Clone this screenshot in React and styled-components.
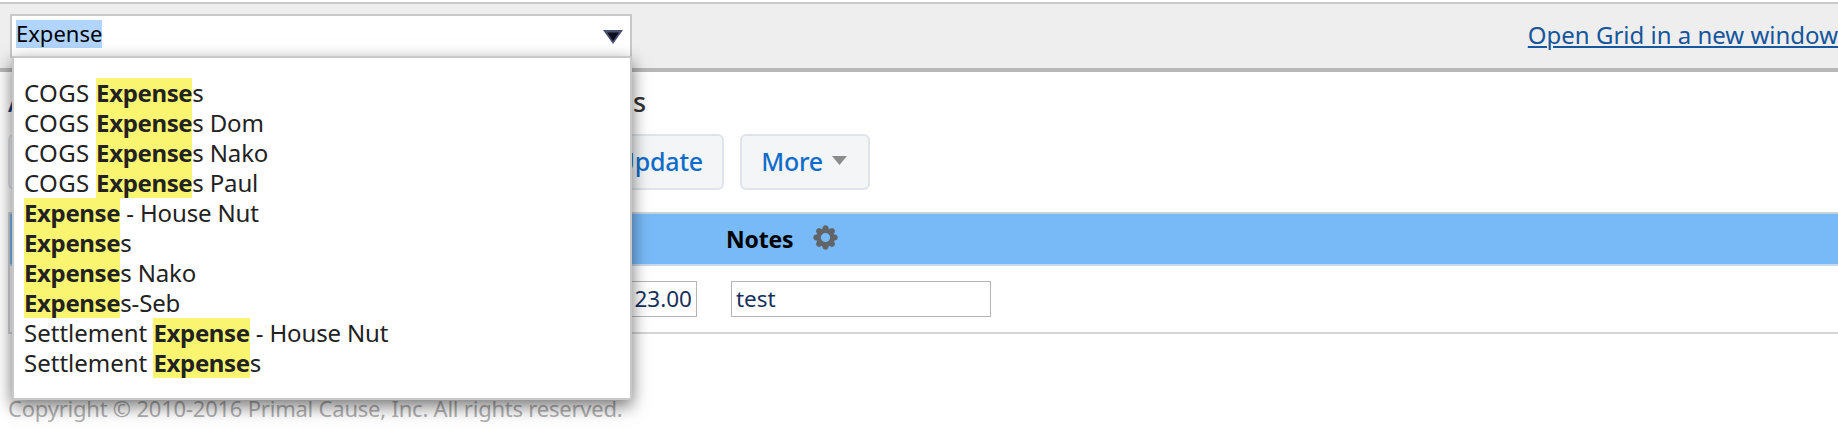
import React from "react";
import styled, { createGlobalStyle } from "styled-components";

const GlobalStyle = createGlobalStyle`
  * { box-sizing: border-box; }
  body {
    margin: 0;
    background: #fff;
    font-family: "Noto Sans", "Open Sans", sans-serif;
    font-size: 24px;
    line-height: 30px;
    white-space: pre;
  }
`;

const Page = styled.div`
  padding-top: 2px;
`;

const Toolbar = styled.header`
  display: flex;
  justify-content: space-between;
  align-items: flex-start;
  height: 70px;
  padding: 10px 0 0 10px;
  background: #eee;
  border-top: 2px solid #c8c8c8;
  border-bottom: 4px solid #b7b7b7;
`;

const Combo = styled.div`
  position: relative;
  display: flex;
  align-items: flex-start;
  justify-content: space-between;
  width: 622px;
  height: 44px;
  padding: 4px 7px 0 4px;
  background: #fff;
  border: 2px solid #c8c8c8;
`;

const Selected = styled.span`
  height: 28px;
  line-height: 27px;
  font-size: 22px;
  color: #000;
  background: #b1d5fe;
`;

const ComboArrow = styled.svg`
  width: 20px;
  height: 14px;
  margin-top: 10px;
`;

const Dropdown = styled.ul`
  position: absolute;
  top: 40px;
  left: 0;
  z-index: 2;
  width: 620px;
  height: 344px;
  margin: 0;
  padding: 20px 10px;
  list-style: none;
  background: #fff;
  border: 2px solid #c8c8c8;
  box-shadow: 0 6px 16px rgba(0, 0, 0, 0.55);
`;

const Option = styled.li`
  display: flex;
  height: 30px;
  color: #222;
`;

const Prefix = styled.span`
  letter-spacing: ${(p) => (p.$wide ? "0.35px" : "0")};
`;

const Suffix = styled.span`
  letter-spacing: -0.16px;
`;

const Match = styled.b`
  background: #faf570;
  letter-spacing: -0.36px;
`;

const NewWindowLink = styled.a`
  margin-top: 6px;
  color: #15569c;
  text-decoration: underline;
  text-decoration-thickness: 2px;
  text-underline-offset: 2px;
`;

const Content = styled.main`
  padding-left: 8px;
`;

const Heading = styled.div`
  display: flex;
  justify-content: space-between;
  width: 638px;
  height: 62px;
  padding-top: 15px;
  font-size: 27px;
  font-weight: 500;
  color: #333;
`;

const Crumb = styled.span`
  color: #1b3a70;
`;

const Actions = styled.div`
  display: flex;
  gap: 16px;
  height: 56px;
`;

const Button = styled.button`
  display: flex;
  align-items: center;
  justify-content: flex-end;
  gap: 9px;
  width: ${(p) => p.$width}px;
  height: 56px;
  padding: 0 ${(p) => p.$pad}px 3px 0;
  font: 500 25px/30px "Noto Sans", sans-serif;
  letter-spacing: -0.2px;
  color: #0f6cc8;
  background: #f3f5f7;
  border: 2px solid #dfe4ea;
  border-radius: 6px;
`;

const Grid = styled.section`
  margin-top: 22px;
  border-left: 2px solid #d4d7db;
`;

const Cells = styled.div`
  display: grid;
  grid-template-columns: 687px 34px 260px;
  align-items: center;
`;

const HeadRow = styled(Cells)`
  height: 54px;
  background: #78baf7;
  border-top: 2px solid #c9d3dc;
  border-bottom: 2px solid #c9d8e8;
`;

const HeadCell = styled.div`
  grid-column: 3;
  display: flex;
  align-items: center;
  gap: 20px;
  margin-left: -5px;
  font-size: 23px;
  font-weight: 700;
  letter-spacing: -0.2px;
  color: #000;
`;

const BodyRow = styled(Cells)`
  height: 68px;
  border-bottom: 2px solid #d6d6d6;
`;

const Field = styled.div`
  grid-column: ${(p) => p.$column};
  justify-self: end;
  width: ${(p) => p.$width}px;
  height: 36px;
  padding: 0 4px;
  border: 1px solid #b5b5b5;
  font-size: 22.5px;
  line-height: 33px;
  color: #17305a;
  text-align: ${(p) => p.$align || "left"};
`;

const Footer = styled.footer`
  margin-top: 59px;
  font-size: 22px;
  letter-spacing: -0.22px;
  color: #b0b0b0;
`;

const options = [
  ["COGS ", "s"],
  ["COGS ", "s Dom"],
  ["COGS ", "s Nako"],
  ["COGS ", "s Paul"],
  ["", " - House Nut"],
  ["", "s"],
  ["", "s Nako"],
  ["", "s-Seb"],
  ["Settlement ", " - House Nut"],
  ["Settlement ", "s"],
];

const GearIcon = styled.svg`
  width: 25px;
  height: 25px;
  margin-top: -3px;
`;

const Gear = () => (
  <GearIcon viewBox="-12.5 -12.5 25 25">
    <g fill="#626568">
      {[0, 45, 90, 135, 180, 225, 270, 315].map((a) => (
        <path key={a} transform={`rotate(${a})`} d="M-3.6-8-2.2-11.4Q0-13 2.2-11.4L3.6-8Z" />
      ))}
    </g>
    <circle r="6.8" fill="none" stroke="#626568" strokeWidth="4.4" />
  </GearIcon>
);

export default function App() {
  return (
    <>
      <GlobalStyle />
      <Page>
        <Toolbar>
          <Combo>
            <Selected>Expense</Selected>
            <ComboArrow viewBox="0 0 20 14">
              <path d="M0 0H20L10 14Z" fill="#4b5070" />
              <path d="M4 2.5H16L10 11Z" fill="#0c0e1e" />
            </ComboArrow>
            <Dropdown>
              {options.map(([before, after]) => (
                <Option key={before + after}>
                  <Prefix $wide={before === "COGS "}>{before}</Prefix>
                  <Match>Expense</Match>
                  <Suffix>{after}</Suffix>
                </Option>
              ))}
            </Dropdown>
          </Combo>
          <NewWindowLink>Open Grid in a new window</NewWindowLink>
        </Toolbar>
        <Content>
          <Heading>
            <Crumb>A</Crumb>
            <span>s</span>
          </Heading>
          <Actions>
            <Button $width={716} $pad={19}>Update</Button>
            <Button $width={130} $pad={21}>
              More
              <svg width="15" height="9" viewBox="0 0 15 9">
                <path d="M0 0H15L7.5 9Z" fill="#8b8b8b" />
              </svg>
            </Button>
          </Actions>
          <Grid>
            <HeadRow>
              <HeadCell>
                Notes
                <Gear />
              </HeadCell>
            </HeadRow>
            <BodyRow>
              <Field $column={1} $width={160} $align="right">23.00</Field>
              <Field $column={3} $width={260}>test</Field>
            </BodyRow>
          </Grid>
          <Footer>Copyright © 2010-2016 Primal Cause, Inc. All rights reserved.</Footer>
        </Content>
      </Page>
    </>
  );
}
